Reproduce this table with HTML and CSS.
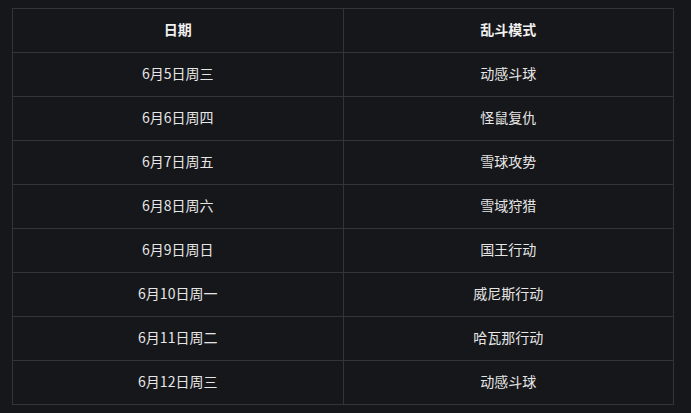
FILE: index.html
```html
<!DOCTYPE html>
<html lang="zh">
<head>
<meta charset="utf-8">
<link rel="stylesheet" href="styles.css">
</head>
<body>
<table class="schedule">
  <thead>
    <tr><th>日期</th><th>乱斗模式</th></tr>
  </thead>
  <tbody>
    <tr><td>6月5日周三</td><td>动感斗球</td></tr>
    <tr><td>6月6日周四</td><td>怪鼠复仇</td></tr>
    <tr><td>6月7日周五</td><td>雪球攻势</td></tr>
    <tr><td>6月8日周六</td><td>雪域狩猎</td></tr>
    <tr><td>6月9日周日</td><td>国王行动</td></tr>
    <tr><td>6月10日周一</td><td>威尼斯行动</td></tr>
    <tr><td>6月11日周二</td><td>哈瓦那行动</td></tr>
    <tr><td>6月12日周三</td><td>动感斗球</td></tr>
  </tbody>
</table>
</body>
</html>
```
FILE: styles.css
```css
html, body {
  background: #16171a;
}
body {
  margin: 8px 0 0 12px;
  font-family: "Noto Sans CJK SC", "Noto Sans", sans-serif;
  color: #e6e6e6;
}
.schedule {
  border-collapse: collapse;
  width: 662px;
  table-layout: fixed;
  font-size: 14px;
}
.schedule th,
.schedule td {
  border: 1px solid #323437;
  height: 40px;
  padding: 0 0 3px;
  text-align: center;
  vertical-align: middle;
  line-height: 20px;
}
.schedule th {
  font-weight: 700;
  color: #f0f0f0;
}
```
